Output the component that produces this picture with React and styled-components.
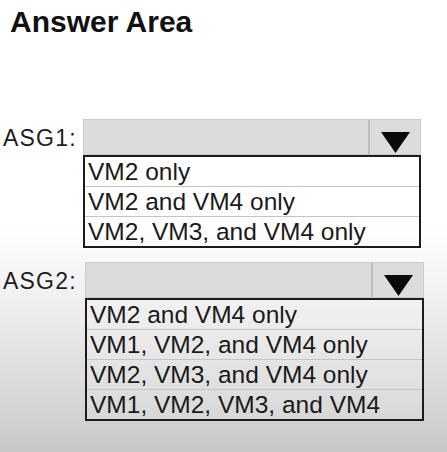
import React from 'react'
import styled, { createGlobalStyle } from 'styled-components'

const Global = createGlobalStyle`
html, body {
  margin: 0;
  padding: 0;
  background: #fff;
}
`

const Page = styled.div`
width: 447px;
height: 452px;
overflow: hidden;
background: linear-gradient(to bottom, #ffffff 0%, #ffffff 50%, #efefef 67%, #dcdcdc 84%, #c8c8c8 100%);
font-family: 'Liberation Sans', Arial, sans-serif;
`

const Title = styled.div`
font-weight: 700;
font-size: 30px;
line-height: 30px;
color: #111;
margin: 7px 0 0 10px;
`

const Question = styled.div`
display: grid;
grid-template-columns: ${p => p.labelW}px ${p => p.boxW}px;
margin-top: ${p => p.top}px;
`

const Label = styled.div`
font-size: 23px;
line-height: 30px;
letter-spacing: 1.2px;
color: #1e1e1e;
padding: 4px 0 0 3px;
`

const Dropdown = styled.div`
display: flex;
flex-direction: column;
`

const Combo = styled.div`
height: 36px;
box-sizing: border-box;
display: flex;
background: #dcdcdc;
border: 1px solid #cbcbcb;
`

const ComboField = styled.div`
flex: 1;
`

const ArrowCell = styled.div`
width: 50px;
border-left: 2px solid #bdbdbd;
display: flex;
align-items: flex-end;
justify-content: center;
padding-bottom: 1px;
`

const List = styled.div`
border: 2px solid #1c1c1c;
background: ${p => p.bg};
`

const Option = styled.div`
font-size: 24.5px;
line-height: ${p => p.h}px;
height: ${p => p.h}px;
padding-left: 3px;
color: #1a1a1a;
white-space: nowrap;
& + & {
  border-top: 1px solid #c4c4c4;
}
`

const Arrow = () => (
  <svg width="29" height="21" viewBox="0 0 29 21">
    <polygon points="0,0 29,0 14.5,21" fill="#0a0a0a" />
  </svg>
)

const Select = ({ options, rowH, bg }) => (
  <Dropdown>
    <Combo>
      <ComboField />
      <ArrowCell>
        <Arrow />
      </ArrowCell>
    </Combo>
    <List bg={bg}>
      {options.map(o => (
        <Option key={o} h={rowH}>{o}</Option>
      ))}
    </List>
  </Dropdown>
)

export default function App() {
  return (
    <Page>
      <Global />
      <Title>Answer Area</Title>
      <Question top={82} labelW={83} boxW={338}>
        <Label>ASG1:</Label>
        <Select
          rowH={29}
          bg="transparent"
          options={['VM2 only', 'VM2 and VM4 only', 'VM2, VM3, and VM4 only']}
        />
      </Question>
      <Question top={14} labelW={85} boxW={339}>
        <Label>ASG2:</Label>
        <Select
          rowH={29}
          bg="rgba(255,255,255,0.15)"
          options={[
            'VM2 and VM4 only',
            'VM1, VM2, and VM4 only',
            'VM2, VM3, and VM4 only',
            'VM1, VM2, VM3, and VM4',
          ]}
        />
      </Question>
    </Page>
  )
}
